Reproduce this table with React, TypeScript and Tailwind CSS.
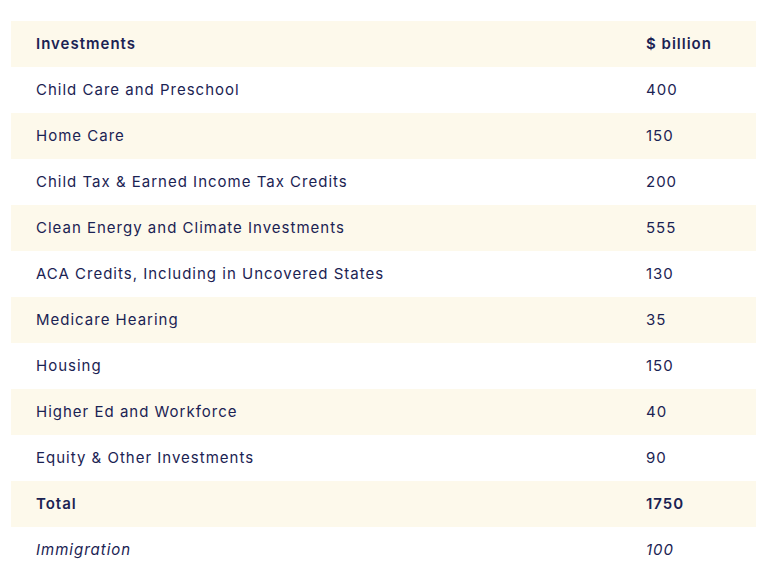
const ROWS: [string, string][] = [
  ['Child Care and Preschool', '400'],
  ['Home Care', '150'],
  ['Child Tax & Earned Income Tax Credits', '200'],
  ['Clean Energy and Climate Investments', '555'],
  ['ACA Credits, Including in Uncovered States', '130'],
  ['Medicare Hearing', '35'],
  ['Housing', '150'],
  ['Higher Ed and Workforce', '40'],
  ['Equity & Other Investments', '90'],
]

export default function App() {
  return (
    <div className="bg-white w-[764px] h-[579px] pt-[21px] px-[11px] text-[15px] text-[#1b2353] font-['Inter',sans-serif] tracking-[1px]">
      <table className="w-[745px] border-collapse">
        <thead>
          <tr className="bg-[#fdf9eb] h-[46px] font-semibold">
            <td className="pl-[25px]">Investments</td>
            <td className="pl-[25px] w-[135px]">$ billion</td>
          </tr>
        </thead>
        <tbody>
          {ROWS.map(([name, value], i) => (
            <tr key={name} className={`h-[46px] ${i % 2 === 1 ? 'bg-[#fdf9eb]' : 'bg-white'}`}>
              <td className="pl-[25px]">{name}</td>
              <td className="pl-[25px]">{value}</td>
            </tr>
          ))}
          <tr className="bg-[#fdf9eb] h-[46px] font-semibold">
            <td className="pl-[25px]">Total</td>
            <td className="pl-[25px]">1750</td>
          </tr>
          <tr className="h-[46px] italic">
            <td className="pl-[25px]">Immigration</td>
            <td className="pl-[25px]">100</td>
          </tr>
        </tbody>
      </table>
    </div>
  )
}
